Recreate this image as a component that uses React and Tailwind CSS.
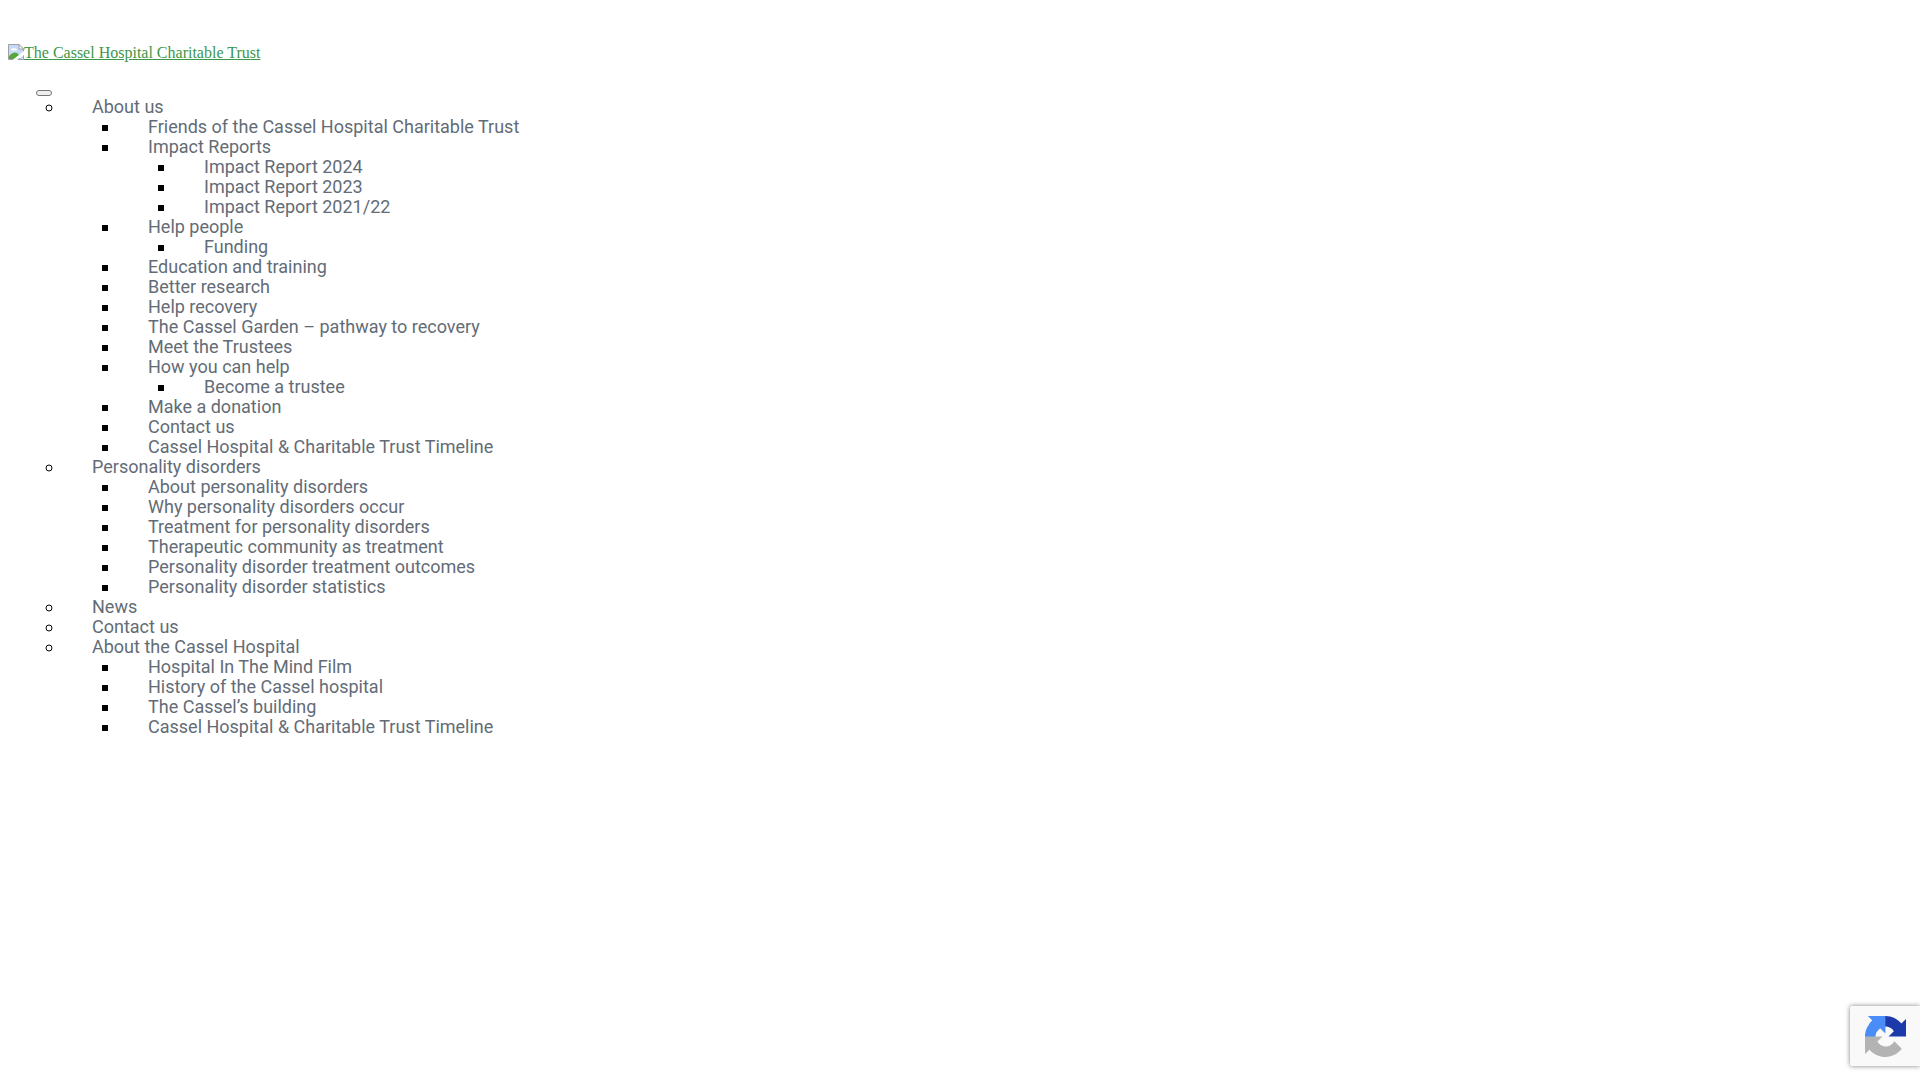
const menu = [
    {
        label: "About us",
        children: [
            { label: "Friends of the Cassel Hospital Charitable Trust" },
            {
                label: "Impact Reports",
                children: [
                    { label: "Impact Report 2024" },
                    { label: "Impact Report 2023" },
                    { label: "Impact Report 2021/22" },
                ],
            },
            { label: "Help people", children: [{ label: "Funding" }] },
            { label: "Education and training" },
            { label: "Better research" },
            { label: "Help recovery" },
            { label: "The Cassel Garden – pathway to recovery" },
            { label: "Meet the Trustees" },
            { label: "How you can help", children: [{ label: "Become a trustee" }] },
            { label: "Make a donation" },
            { label: "Contact us" },
            { label: "Cassel Hospital & Charitable Trust Timeline" },
        ],
    },
    {
        label: "Personality disorders",
        children: [
            { label: "About personality disorders" },
            { label: "Why personality disorders occur" },
            { label: "Treatment for personality disorders" },
            { label: "Therapeutic community as treatment" },
            { label: "Personality disorder treatment outcomes" },
            { label: "Personality disorder statistics" },
        ],
    },
    { label: "News" },
    { label: "Contact us" },
    {
        label: "About the Cassel Hospital",
        children: [
            { label: "Hospital In The Mind Film" },
            { label: "History of the Cassel hospital" },
            { label: "The Cassel’s building" },
            { label: "Cassel Hospital & Charitable Trust Timeline" },
        ],
    },
];

const MenuItems = ({ items }) => items.map((item, index) => (
    <li key={index}>
        <a href="#" className="block w-fit pl-7 text-[#636c76]">{item.label}</a>
        {item.children ? (
            <ul className="list-[square] pl-14">
                <MenuItems items={item.children} />
            </ul>
        ) : null}
    </li>
));

const MissingImageIcon = () => (
    <svg width="16" height="16" viewBox="0 0 16 16" className="shrink-0" aria-hidden="true">
        <path d="M.5 .5H11L15.500 5V15.500H.5Z" fill="#c6d9f7" stroke="#a0a0a0" />
        <path d="M3 6.500a2 2 0 0 1 3-2a2 2 0 0 1 3 2Z" fill="#fff" />
        <path d="M1 15V12Q5 7 9 9L12 12V15Z" fill="#57a639" />
        <path d="M16 7L4.500 16H9L16 11Z" fill="#fff" />
        <path d="M11 .5V5H15.500Z" fill="#fff" stroke="#a0a0a0" />
    </svg>
);

const RecaptchaBadge = () => (
    <aside className="fixed right-0 bottom-[14px] flex h-[60px] w-[70px] items-center justify-center rounded-l-xs bg-[#f9f9f9] shadow-[0_0_5px_gray]">
        <svg width="41" height="41" viewBox="0 0 64 64" role="img" aria-label="reCAPTCHA">
            <path d="M64 31.955l-.033-1.370V4.687l-7.160 7.160C50.948 4.674 42.033.093 32.050.093c-10.400 0-19.622 4.960-25.458 12.640l11.736 11.860a15.550 15.550 0 0 1 4.754-5.334c2.050-1.600 4.952-2.906 8.968-2.906.485 0 .86.057 1.135.163 4.976.393 9.288 3.140 11.828 7.124l-8.307 8.307L64 31.953" fill="#1c3aa9" />
            <path d="M31.862.094l-1.370.033H4.594l7.160 7.160C4.580 13.147 0 22.060 0 32.046c0 10.400 4.960 19.622 12.640 25.458L24.500 45.768a15.550 15.550 0 0 1-5.334-4.754c-1.600-2.050-2.906-4.952-2.906-8.968 0-.485.057-.86.163-1.135.393-4.976 3.140-9.288 7.124-11.828l8.307 8.307L31.860.095" fill="#4b8df8" />
            <path d="M.001 32.045l.033 1.370v25.898l7.160-7.160c5.860 7.173 14.774 11.754 24.760 11.754 10.400 0 19.622-4.960 25.458-12.640l-11.736-11.860a15.550 15.550 0 0 1-4.754 5.334c-2.050 1.600-4.952 2.906-8.968 2.906-.485 0-.86-.057-1.135-.163-4.976-.393-9.288-3.140-11.828-7.124l8.307-8.307L0 32.045" fill="#b3b3b3" />
        </svg>
    </aside>
);

const App = () => {
    return (
        <div className="px-2 pt-11 font-['Liberation_Serif',serif] text-base text-black">
            <header>
                <a href="#" className="flex w-fit leading-[18px] text-[#3c9749] underline">
                    <MissingImageIcon />
                    The Cassel Hospital Charitable Trust
                </a>
            </header>
            <nav className="pt-7 pl-7">
                <button type="button" aria-label="Toggle menu" className="block h-[6px] w-4 rounded-[3px] border border-[#767676] bg-[#efefef]"></button>
                <ul className="list-[circle] pt-px pl-7 font-['Roboto',sans-serif] text-[18px] leading-5">
                    <MenuItems items={menu} />
                </ul>
            </nav>
            <RecaptchaBadge />
        </div>
    );
};

export default App;
